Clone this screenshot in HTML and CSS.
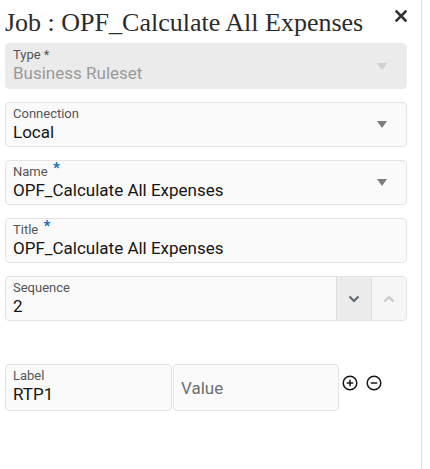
FILE: index.html
```html
<!DOCTYPE html>
<html lang="en">
<head>
    <meta charset="UTF-8">
    <title>Job : OPF_Calculate All Expenses</title>
    <link rel="stylesheet" href="styles.css">
</head>
<body>
    <div class="dialog">
        <div class="header">
            <h1>Job : OPF_Calculate All Expenses</h1>
            <button class="close" title="Close">
                <svg width="12" height="12" viewBox="0 0 12 12"><path d="M1.5 1.5L10.5 10.5M10.5 1.5L1.5 10.5" stroke="#333" stroke-width="2.6" stroke-linecap="square"/></svg>
            </button>
        </div>

        <div class="field disabled">
            <div class="field-body">
                <label>Type *</label>
                <div class="value">Business Ruleset</div>
            </div>
            <span class="arrow"></span>
        </div>

        <div class="field">
            <div class="field-body">
                <label>Connection</label>
                <div class="value">Local</div>
            </div>
            <span class="arrow"></span>
        </div>

        <div class="field">
            <div class="field-body">
                <label>Name <span class="req">*</span></label>
                <div class="value">OPF_Calculate All Expenses</div>
            </div>
            <span class="arrow"></span>
        </div>

        <div class="field">
            <div class="field-body">
                <label>Title <span class="req">*</span></label>
                <div class="value">OPF_Calculate All Expenses</div>
            </div>
        </div>

        <div class="field">
            <div class="field-body">
                <label>Sequence</label>
                <div class="value">2</div>
            </div>
            <button class="step step-down">
                <svg width="12" height="8" viewBox="0 0 12 8"><path d="M1.5 1.5L6 6L10.5 1.5" fill="none" stroke="#5b6770" stroke-width="2"/></svg>
            </button>
            <button class="step step-up">
                <svg width="12" height="8" viewBox="0 0 12 8"><path d="M1.5 6.5L6 2L10.5 6.5" fill="none" stroke="#c9c9c9" stroke-width="2"/></svg>
            </button>
        </div>

        <div class="param-row">
            <div class="field small">
                <div class="field-body">
                    <label>Label</label>
                    <div class="value">RTP1</div>
                </div>
            </div>
            <div class="field small">
                <div class="field-body center">
                    <div class="value placeholder">Value</div>
                </div>
            </div>
            <div class="row-actions">
                <svg width="16" height="16" viewBox="0 0 16 16"><circle cx="8" cy="8" r="6.8" fill="none" stroke="#161513" stroke-width="1.5"/><path d="M4.8 8H11.2M8 4.8V11.2" stroke="#161513" stroke-width="1.5"/></svg>
                <svg width="16" height="16" viewBox="0 0 16 16"><circle cx="8" cy="8" r="6.8" fill="none" stroke="#161513" stroke-width="1.5"/><path d="M4.8 8H11.2" stroke="#161513" stroke-width="1.5"/></svg>
            </div>
        </div>
    </div>
</body>
</html>
```

FILE: styles.css
```css
body {
    margin: 0;
    padding: 0;
    background-color: white;
    font-family: Roboto, "Noto Sans", Arial, sans-serif;
}
.dialog {
    width: 402px;
    height: 469px;
    padding: 0 14px 0 5px;
    border-right: 1px solid #dcdcdc;
    box-sizing: content-box;
}
.header {
    display: flex;
    justify-content: space-between;
    align-items: flex-start;
    height: 43px;
}
h1 {
    margin: 0;
    padding-top: 8px;
    font-family: "Liberation Serif", Georgia, serif;
    font-weight: normal;
    font-size: 26px;
    line-height: 30px;
    color: #2b2b2b;
}
.close {
    border: none;
    background: none;
    padding: 0;
    margin-top: 10px;
    width: 12px;
    height: 12px;
    display: flex;
}
.field {
    display: flex;
    align-items: stretch;
    height: 45px;
    margin-bottom: 13px;
    border: 1px solid #e4e4e4;
    border-radius: 4px;
    background-color: #fafafa;
    box-sizing: border-box;
}
.field.disabled {
    height: 46px;
    border-color: #ebebeb;
    background-color: #ebebeb;
}
.field-body {
    flex: 1;
    padding: 3px 7px 0;
}
.field-body.center {
    display: flex;
    align-items: center;
    padding-top: 0;
}
label {
    display: block;
    font-size: 13px;
    line-height: 15.5px;
    color: #555;
}
.req {
    color: #0a6dc2;
    font-size: 15px;
    font-weight: bold;
    vertical-align: 3px;
    line-height: 0;
    margin-left: 2px;
}
.value {
    font-size: 17px;
    line-height: 20px;
    color: #161513;
}
.disabled .value {
    color: #9a9a9a;
}
.placeholder {
    color: #6f6f6f;
}
.arrow {
    align-self: center;
    width: 0;
    height: 0;
    margin-right: 19px;
    border-left: 5.5px solid transparent;
    border-right: 5.5px solid transparent;
    border-top: 7px solid #7c7c7c;
}
.disabled .arrow {
    border-top-color: #cfcfcf;
}
.step {
    width: 35px;
    border: none;
    border-left: 1px solid #dedede;
    padding: 0;
    display: flex;
    align-items: center;
    justify-content: center;
}
.step-down {
    background-color: #ececec;
}
.step-up {
    background-color: #f6f6f6;
    border-radius: 0 3px 3px 0;
}
.param-row {
    display: flex;
    align-items: flex-start;
    margin-top: 43px;
    gap: 1px;
}
.field.small {
    width: 167px;
    height: 47px;
}
.field.small:nth-child(2) {
    width: 166px;
}
.row-actions {
    display: flex;
    gap: 8px;
    margin-left: 2px;
    margin-top: 11px;
}
```
